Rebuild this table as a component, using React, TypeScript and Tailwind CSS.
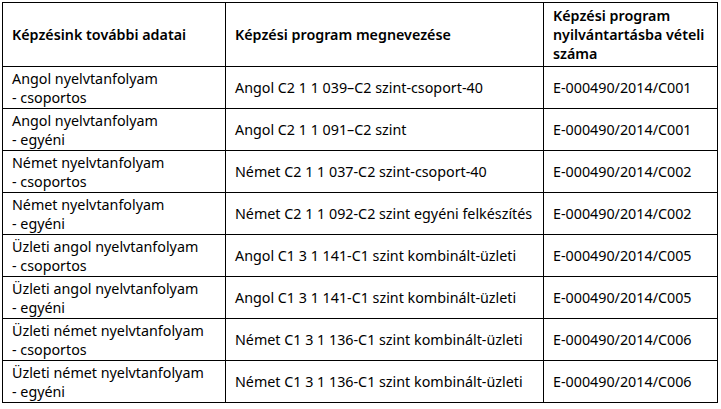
const rows = [
  ["Angol nyelvtanfolyam", "- csoportos", "Angol C2 1 1 039–C2 szint-csoport-40", "E-000490/2014/C001"],
  ["Angol nyelvtanfolyam", "- egyéni", "Angol C2 1 1 091–C2 szint", "E-000490/2014/C001"],
  ["Német nyelvtanfolyam", "- csoportos", "Német C2 1 1 037-C2 szint-csoport-40", "E-000490/2014/C002"],
  ["Német nyelvtanfolyam", "- egyéni", "Német C2 1 1 092-C2 szint egyéni felkészítés", "E-000490/2014/C002"],
  ["Üzleti angol nyelvtanfolyam", "- csoportos", "Angol C1 3 1 141-C1 szint kombinált-üzleti", "E-000490/2014/C005"],
  ["Üzleti angol nyelvtanfolyam", "- egyéni", "Angol C1 3 1 141-C1 szint kombinált-üzleti", "E-000490/2014/C005"],
  ["Üzleti német nyelvtanfolyam", "- csoportos", "Német C1 3 1 136-C1 szint kombinált-üzleti", "E-000490/2014/C006"],
  ["Üzleti német nyelvtanfolyam", "- egyéni", "Német C1 3 1 136-C1 szint kombinált-üzleti", "E-000490/2014/C006"],
];

export default function App() {
  return (
    <div
      className="bg-white text-black pl-[2px] pt-[2px] w-[721px] h-[409px]"
      style={{ fontFamily: '"Noto Sans", "Open Sans", sans-serif' }}
    >
      <table className="border-collapse text-[14.3px] leading-[19px] w-[715px] table-fixed">
        <colgroup>
          <col className="w-[223px]" />
          <col className="w-[318px]" />
          <col className="w-[174px]" />
        </colgroup>
        <thead>
          <tr className="h-[64px]">
            <th className="border border-black px-[9px] text-left align-middle font-semibold">
              Képzésink további adatai
            </th>
            <th className="border border-black px-[9px] text-left align-middle font-semibold">
              Képzési program megnevezése
            </th>
            <th className="border border-black px-[9px] text-left align-middle font-semibold">
              Képzési program nyilvántartásba vételi száma
            </th>
          </tr>
        </thead>
        <tbody>
          {rows.map((r, i) => (
            <tr key={i} className="h-[42px]">
              <td className="border border-black px-[9px] align-middle">
                <div>{r[0]}</div>
                <div>{r[1]}</div>
              </td>
              <td className="border border-black px-[9px] align-middle">{r[2]}</td>
              <td className="border border-black px-[9px] align-middle">{r[3]}</td>
            </tr>
          ))}
        </tbody>
      </table>
    </div>
  );
}
